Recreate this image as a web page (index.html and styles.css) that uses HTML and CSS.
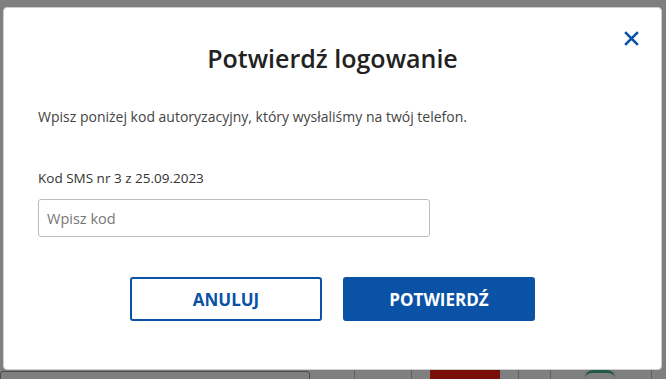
FILE: index.html
```html
<!DOCTYPE html>
<html lang="pl">

<head>
    <meta charset="utf-8">
    <title>Potwierdź logowanie</title>
    <link rel="stylesheet" href="styles.css">
</head>

<body>
    <div class="modal">
        <button class="close" type="button" aria-label="Zamknij">
            <svg width="17" height="17" viewBox="0 0 16 16">
                <path d="M2 2 L14 14 M14 2 L2 14" stroke="#0a52a6" stroke-width="2.5" fill="none"/>
            </svg>
        </button>

        <h1 class="title">Potwierdź logowanie</h1>

        <p class="intro">Wpisz poniżej kod autoryzacyjny, który wysłaliśmy na twój telefon.</p>

        <label class="code-label" for="code">Kod SMS nr 3 z 25.09.2023</label>
        <input class="code-input" id="code" type="text" placeholder="Wpisz kod">

        <div class="actions">
            <button class="btn btn-outline" type="button">ANULUJ</button>
            <button class="btn btn-primary" type="submit">POTWIERDŹ</button>
        </div>
    </div>

    <div class="backdrop-strip">
        <span class="strip-box"></span>
        <span class="strip-line gap-a"></span>
        <span class="strip-line gap-b"></span>
        <span class="strip-red"></span>
        <span class="strip-line gap-c"></span>
        <span class="strip-line gap-d"></span>
        <span class="strip-leaf"></span>
        <span class="strip-line gap-e"></span>
    </div>
</body>

</html>
```

FILE: styles.css
```css
html,
body {
    margin: 0;
    padding: 0;
}

body {
    background-color: #7f7f7f;
    font-family: "Open Sans", Arial, sans-serif;
    width: 666px;
    height: 379px;
    overflow: hidden;
}

.modal {
    position: relative;
    box-sizing: border-box;
    width: 659px;
    height: 363px;
    margin: 7px 0 0 3px;
    padding: 0 34px;
    background-color: #fff;
    border: 1px solid #cfcfcf;
    border-radius: 4px;
}

.close {
    position: absolute;
    top: 22px;
    right: 21px;
    padding: 0;
    border: none;
    background: none;
    cursor: pointer;
    line-height: 0;
}

.title {
    margin: 34px 0 0;
    font-size: 25px;
    line-height: 32px;
    font-weight: 600;
    text-align: center;
    color: #222;
}

.intro {
    margin: 33px 0 0;
    font-size: 14px;
    line-height: 20px;
    color: #444;
}

.code-label {
    display: block;
    margin-top: 41px;
    font-size: 13.5px;
    line-height: 20px;
    color: #333;
}

.code-input {
    display: block;
    box-sizing: border-box;
    width: 392px;
    height: 38px;
    margin-top: 11px;
    padding: 0 8px;
    border: 1px solid #bdbdbd;
    border-radius: 3px;
    font-family: "Open Sans", Arial, sans-serif;
    font-size: 14.5px;
    color: #333;
}

.code-input::placeholder {
    color: #777;
}

.actions {
    display: flex;
    justify-content: center;
    gap: 21px;
    margin-top: 40px;
}

.btn {
    box-sizing: border-box;
    width: 192px;
    height: 44px;
    border-radius: 3px;
    font-family: "Open Sans", Arial, sans-serif;
    font-size: 17px;
    font-weight: 700;
    cursor: pointer;
}

.btn-outline {
    background-color: #fff;
    border: 2px solid #0a52a6;
    color: #0a52a6;
}

.btn-primary {
    background-color: #0a52a6;
    border: 2px solid #0a52a6;
    color: #fff;
}

.backdrop-strip {
    display: flex;
    align-items: flex-start;
    height: 9px;
}

.strip-box {
    width: 308px;
    height: 12px;
    border: 1px solid #4a4a4a;
    border-radius: 3px;
    margin-top: 1px;
}

.strip-line {
    width: 1px;
    height: 9px;
    background-color: #5e5e5e;
}

.gap-a {
    margin-left: 44px;
}

.gap-b {
    margin-left: 56px;
}

.strip-red {
    width: 70px;
    height: 9px;
    margin-left: 18px;
    background-color: #7a0e09;
}

.gap-c {
    margin-left: 18px;
}

.gap-d {
    margin-left: 31px;
}

.strip-leaf {
    width: 30px;
    height: 6px;
    margin-left: 34px;
    border-top: 3px solid #1f5a4a;
    border-radius: 8px 8px 0 0;
}

.gap-e {
    margin-left: 36px;
}
```
